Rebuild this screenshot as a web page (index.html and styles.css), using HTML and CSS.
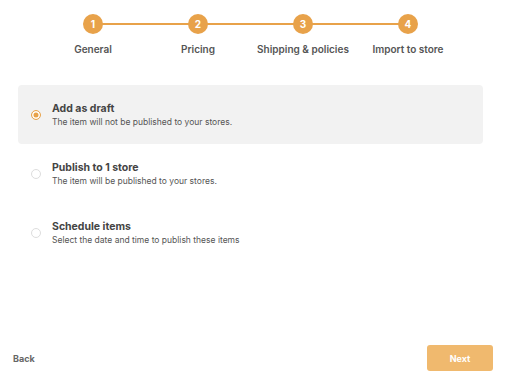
FILE: index.html
```html
<!DOCTYPE html>
<html lang="en">
<head>
    <meta charset="UTF-8">
    <meta name="viewport" content="width=device-width, initial-scale=1.0">
    <title>Import items</title>
    <link rel="stylesheet" href="styles.css">
</head>
<body>
    <div class="page">
        <div class="content">
            <!-- Progress steps -->
            <ol class="steps">
                <li class="step"><span class="dot">1</span><span class="label">General</span></li>
                <li class="step"><span class="dot">2</span><span class="label">Pricing</span></li>
                <li class="step"><span class="dot">3</span><span class="label">Shipping &amp; policies</span></li>
                <li class="step"><span class="dot">4</span><span class="label">Import to store</span></li>
            </ol>

            <div class="options">
                <label class="option selected">
                    <span class="radio"></span>
                    <span class="text">
                        <span class="title">Add as draft</span>
                        <span class="desc">The item will not be published to your stores.</span>
                    </span>
                </label>
                <label class="option">
                    <span class="radio"></span>
                    <span class="text">
                        <span class="title">Publish to 1 store</span>
                        <span class="desc">The item will be published to your stores.</span>
                    </span>
                </label>
                <label class="option">
                    <span class="radio"></span>
                    <span class="text">
                        <span class="title">Schedule items</span>
                        <span class="desc">Select the date and time to publish these items</span>
                    </span>
                </label>
            </div>
        </div>

        <div class="footer">
            <button class="back">Back</button>
            <button class="next">Next</button>
        </div>
    </div>
</body>
</html>
```

FILE: styles.css
```css
* {
    margin: 0;
    padding: 0;
    box-sizing: border-box;
}

body {
    font-family: Inter, "Noto Sans", sans-serif;
    background: #fff;
    color: #444;
}

.page {
    height: 378px;
    display: flex;
    flex-direction: column;
    justify-content: space-between;
}

.content {
    padding: 14px 25px 0 18px;
}

/* Stepper */
.steps {
    list-style: none;
    display: flex;
    justify-content: center;
}

.step {
    width: 105px;
    display: flex;
    flex-direction: column;
    align-items: center;
    position: relative;
}

/* connecting line to the next step */
.step::after {
    content: '';
    position: absolute;
    top: 9px;
    left: 50%;
    width: 105px;
    height: 2px;
    background: #e8a24a;
}

.step:last-child::after {
    display: none;
}

.dot {
    width: 20px;
    height: 20px;
    border-radius: 50%;
    background: #e8a24a;
    color: #fff;
    font-size: 10px;
    font-weight: 700;
    display: flex;
    align-items: center;
    justify-content: center;
    position: relative;
    z-index: 1;
}

.label {
    margin-top: 9px;
    font-size: 10px;
    font-weight: 600;
    color: #555;
    white-space: nowrap;
}

/* Publish options */
.options {
    margin-top: 30px;
    display: flex;
    flex-direction: column;
}

.option {
    height: 59px;
    display: flex;
    align-items: center;
    gap: 11px;
    padding-left: 13px;
    border-radius: 4px;
    cursor: pointer;
}

.option.selected {
    background: #f2f2f2;
}

.radio {
    width: 10px;
    height: 10px;
    border-radius: 50%;
    border: 1px solid #ddd;
    background: #fff;
    flex-shrink: 0;
}

.option.selected .radio {
    border: 1px solid #e8a24a;
    box-shadow: inset 0 0 0 1.5px #fff, inset 0 0 0 5px #e8a24a;
}

.text {
    display: flex;
    flex-direction: column;
    gap: 2px;
}

.title {
    font-size: 10.5px;
    font-weight: 700;
    color: #444;
}

.desc {
    font-size: 8.5px;
    color: #555;
}

/* Footer buttons */
.footer {
    display: flex;
    justify-content: space-between;
    align-items: center;
    padding: 0 15px 7px 13px;
}

button {
    font-family: inherit;
    border: none;
    cursor: pointer;
}

.back {
    background: none;
    font-size: 9px;
    font-weight: 700;
    color: #666;
}

.next {
    width: 66px;
    height: 26px;
    border-radius: 3px;
    background: #f0b96e;
    color: #fff;
    font-size: 9px;
    font-weight: 700;
}
```
